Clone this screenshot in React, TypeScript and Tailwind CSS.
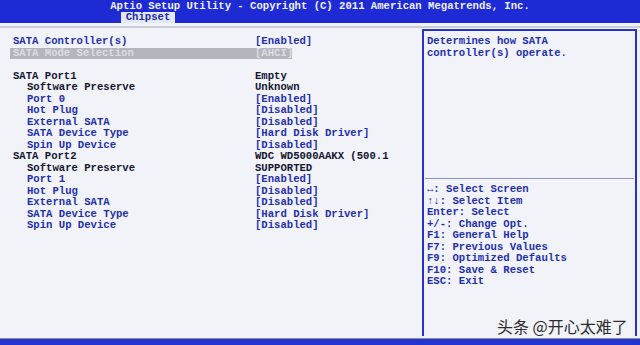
import React from "react";

type Row = { label: string; value?: string; indent?: boolean; dark?: boolean; valueDark?: boolean; selected?: boolean };

const rows: (Row | null)[] = [
  { label: "SATA Controller(s)", value: "[Enabled]", dark: false },
  { label: "SATA Mode Selection", value: "[AHCI]", selected: true },
  null,
  { label: "SATA Port1", value: "Empty", dark: true, valueDark: true },
  { label: "Software Preserve", value: "Unknown", indent: true, dark: true, valueDark: true },
  { label: "Port 0", value: "[Enabled]", indent: true },
  { label: "Hot Plug", value: "[Disabled]", indent: true },
  { label: "External SATA", value: "[Disabled]", indent: true },
  { label: "SATA Device Type", value: "[Hard Disk Driver]", indent: true },
  { label: "Spin Up Device", value: "[Disabled]", indent: true },
  { label: "SATA Port2", value: "WDC WD5000AAKX (500.1", dark: true, valueDark: true },
  { label: "Software Preserve", value: "SUPPORTED", indent: true, dark: true, valueDark: true },
  { label: "Port 1", value: "[Enabled]", indent: true },
  { label: "Hot Plug", value: "[Disabled]", indent: true },
  { label: "External SATA", value: "[Disabled]", indent: true },
  { label: "SATA Device Type", value: "[Hard Disk Driver]", indent: true },
  { label: "Spin Up Device", value: "[Disabled]", indent: true },
];

const keys = [
  "\u2194: Select Screen",
  "\u2191\u2193: Select Item",
  "Enter: Select",
  "+/-: Change Opt.",
  "F1: General Help",
  "F7: Previous Values",
  "F9: Optimized Defaults",
  "F10: Save & Reset",
  "ESC: Exit",
];

export default function App() {
  return (
    <div className="relative w-[640px] h-[345px] overflow-hidden flex flex-col bg-[#f1f3f9] font-['Liberation_Mono',monospace] font-bold text-[10.6px] leading-[11.5px]">
      {/* header */}
      <div className="h-[23px] bg-[#1e2bd4] flex flex-col">
        <div className="h-[11px] pt-[1px] text-center text-[#eef0ff] leading-[11px]">
          Aptio Setup Utility - Copyright (C) 2011 American Megatrends, Inc.
        </div>
        <div className="flex pl-[121px] pt-[1px]">
          <div className="h-[11px] w-[54px] bg-[#e2e8f6] text-[#1b2aa6] text-center leading-[11px]">Chipset</div>
        </div>
      </div>
      <div className="h-[5px] border-b-2 border-[#c9cdd6]" />

      <div className="flex-1 flex">
        {/* left pane */}
        <div className="w-[422px] pt-[8px] pl-[10px]">
          {rows.map((r, i) =>
            r ? (
              <div
                key={i}
                className={`flex h-[11.5px] w-[282px] ${r.selected ? "bg-[#b4b5bd] text-[#dcdde4]" : ""}`}
              >
                <div
                  className={`w-[245px] shrink-0 ${r.indent ? "pl-[17px]" : "pl-[3px]"} ${
                    r.selected ? "" : r.dark ? "text-[#141630]" : "text-[#1f2fae]"
                  }`}
                >
                  {r.label}
                </div>
                <div className={`shrink-0 whitespace-nowrap ${r.selected ? "" : r.valueDark ? "text-[#141630]" : "text-[#1f2fae]"}`}>
                  {r.value}
                </div>
              </div>
            ) : (
              <div key={i} className="h-[11.5px]" />
            )
          )}
        </div>

        {/* right pane */}
        <div className="w-[215px] mt-[1px] mb-[2px] border-2 border-b-0 border-[#2733c8] flex flex-col text-[#1f2fae]">
          <div className="h-[147px] pl-[3px] pt-[5px]">
            <div>Determines how SATA</div>
            <div>controller(s) operate.</div>
          </div>
          <div className="mx-[1px] border-t border-[#8f95b8]" />
          <div className="pl-[3px] pt-[5px]">
            {keys.map((k) => (
              <div key={k} className="h-[11.5px] whitespace-nowrap">{k}</div>
            ))}
          </div>
        </div>
      </div>

      <div className="h-[1px] bg-[#8c8f9a]" />
      <div className="h-[6px] bg-[#2434d2]" />

      <div className="absolute left-[497px] top-[316px] text-[16px] font-normal text-[#2b2b2b] font-['Noto_Sans_CJK_SC',sans-serif] leading-[20px]">
        头条 @开心太难了
      </div>
    </div>
  );
}
